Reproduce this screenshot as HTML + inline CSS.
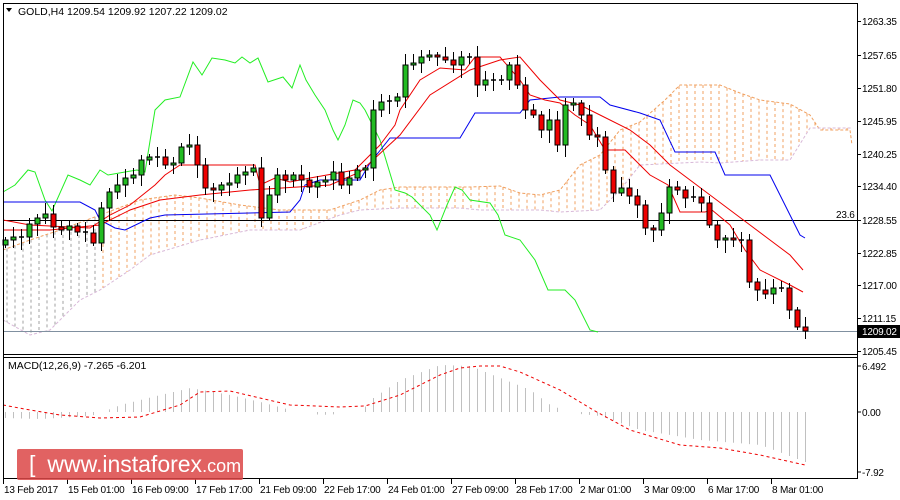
<!DOCTYPE html>
<html><head><meta charset="utf-8">
<style>
html,body{margin:0;padding:0;background:#fff;}
body{width:900px;height:500px;overflow:hidden;position:relative;font-family:"Liberation Sans",sans-serif;}
svg{position:absolute;left:0;top:0;}
svg text{font-family:"Liberation Sans",sans-serif;font-size:10.5px;fill:#000;}
svg text.ax{font-size:10px;letter-spacing:-0.2px;}
#logo{position:absolute;left:17px;top:449px;width:226px;height:31px;background:rgba(220,70,70,0.85);border-radius:2px;color:#fff;font-size:23px;line-height:31px;white-space:nowrap;}
</style></head><body>
<svg id="s" width="900" height="500" xmlns="http://www.w3.org/2000/svg"></svg>
<div id="logo"><span style="margin-left:12px">[</span><span style="margin-left:12px">www.instaforex</span><span style="font-size:18px">.com</span><span style="margin-left:6px">]</span></div>
<script>
(function(){
var s=document.getElementById('s');var h='';
function pl(pts,col,w,dash){return '<polyline fill="none" stroke="'+col+'" stroke-width="'+(w||1)+'"'+(dash?' stroke-dasharray="'+dash+'"':'')+' points="'+pts.map(function(p){return p[0]+','+p[1]}).join(' ')+'"/>';}
function at(pts,x){for(var i=0;i<pts.length-1;i++){if(x>=pts[i][0]&&x<=pts[i+1][0]){var t=(x-pts[i][0])/(pts[i+1][0]-pts[i][0]);return pts[i][1]+t*(pts[i+1][1]-pts[i][1]);}}return null;}
var A=[[3,250],[30,240],[60,230],[100,215],[140,200],[175,195],[200,198],[240,205],[280,210],[330,210],[360,200],[380,190],[400,187],[470,187],[500,186],[520,193],[540,195],[560,190],[580,165],[600,155],[620,130],[640,122],[665,100],[680,85],[720,85],[740,93],[760,100],[790,104],[810,115],[820,130],[850,130],[852,145]];
var B=[[3,320],[30,335],[50,330],[80,300],[100,290],[130,270],[150,255],[200,240],[250,230],[300,230],[340,215],[360,210],[400,208],[460,208],[480,210],[540,210],[560,212],[600,210],[620,190],[640,165],[700,162],[720,163],[760,160],[790,160],[810,128],[852,128]];
for(var xx=7;xx<852;xx+=8){var a=at(A,xx),b=at(B,xx);if(a==null||b==null)continue;var cc=xx<100?'#a0a0a0':'#f0a060';h+='<line x1="'+xx+'" x2="'+xx+'" y1="'+a+'" y2="'+b+'" stroke="'+cc+'" stroke-dasharray="3,3"/>';}
h+=pl(A,'#f0a060',1,'3,2');h+=pl(B,'#d8b8d8',1,'3,2');
h+='<line x1="3" x2="857" y1="220.5" y2="220.5" stroke="#000"/>';
h+='<line x1="3" x2="857" y1="331.5" y2="331.5" stroke="#8090a0"/>';
h+='<text class="ax" x="836" y="218">23.6</text>';
h+=pl([[3,192],[15,185],[28,170],[35,172],[45,200],[52,211],[68,175],[80,180],[90,185],[100,170],[108,175],[125,172],[137,170],[145,172],[155,110],[165,100],[180,97],[193,62],[202,75],[212,58],[225,60],[235,63],[242,57],[250,63],[258,58],[268,82],[283,77],[292,88],[300,65],[306,80],[315,95],[325,110],[333,130],[338,140],[345,125],[353,100],[360,103],[365,110],[380,140],[395,190],[405,193],[412,197],[430,215],[437,230],[447,205],[455,187],[462,190],[470,200],[490,203],[498,215],[505,235],[520,240],[535,260],[548,290],[565,290],[575,300],[590,330],[598,332]],'#22ee22');
h+=pl([[3,202],[80,202],[95,210],[100,220],[115,228],[125,230],[150,218],[165,215],[290,212],[300,200],[305,185],[320,180],[360,180],[370,163],[390,138],[420,138],[460,138],[475,113],[520,113],[530,100],[560,97],[600,97],[610,105],[640,113],[660,120],[675,152],[715,152],[725,175],[770,175],[780,195],[800,235],[805,238]],'#0000ee');
h+=pl([[3,220],[30,225],[90,228],[110,215],[130,205],[155,185],[165,175],[180,165],[255,165],[260,185],[275,178],[290,182],[310,178],[355,170],[365,160],[380,145],[395,125],[400,110],[420,80],[440,68],[465,70],[475,57],[500,57],[520,80],[530,95],[545,100],[560,103],[575,115],[590,125],[605,150],[625,150],[640,165],[650,175],[668,185],[680,212],[705,212],[712,210],[730,225],[745,250],[760,270],[790,285],[803,292]],'#ee0000');
h+=pl([[3,230],[50,230],[100,225],[130,210],[160,200],[200,195],[250,190],[330,185],[360,172],[400,135],[430,95],[470,70],[500,60],[520,57],[540,80],[560,100],[580,105],[600,115],[630,130],[650,145],[670,165],[690,180],[710,195],[730,210],[750,225],[770,240],[790,255],[803,270]],'#ee0000');
var C=[240,237,237,224,218,214,227,230,226,232,233,243,208,192,185,178,175,160,157,157,165,163,147,145,165,188,190,185,183,175,172,168,218,195,175,180,175,180,187,182,180,172,185,178,170,168,110,102,101,97,65,63,57,55,57,60,65,57,57,85,80,80,80,65,85,110,115,130,120,145,105,103,115,135,137,170,193,188,196,205,228,230,213,187,190,198,197,203,225,240,238,240,240,282,290,294,288,288,310,327,331];
var prev=245;
for(var i=0;i<C.length;i++){var x=5+8*i,o=prev,c=C[i];var t0=Math.min(o,c),b0=Math.max(o,c);var hi=t0-3-(i*7%9),lo=b0+3+(i*5%11);
h+='<line x1="'+(x+.5)+'" x2="'+(x+.5)+'" y1="'+hi+'" y2="'+lo+'" stroke="#000"/>';
if(b0-t0<1.5){h+='<line x1="'+(x-2)+'" x2="'+(x+3)+'" y1="'+t0+'" y2="'+t0+'" stroke="#000" stroke-width="1.5"/>';}
else h+='<rect x="'+(x-2)+'" y="'+t0+'" width="5" height="'+(b0-t0)+'" fill="'+(c<o?'#22bb22':'#ee0000')+'" stroke="#000" stroke-width="1"/>';
prev=c;}
var H=[[3,418],[40,419],[90,416],[100,413],[120,405],[160,395],[190,388],[230,395],[260,402],[290,410],[320,415],[360,413],[370,400],[400,380],[440,365],[470,366],[500,378],[530,390],[550,405],[570,413],[600,416],[640,430],[700,440],[760,445],[805,462]];
for(var j=0;j<C.length;j++){var x2=5+8*j;var y=at(H,x2);if(Math.abs(y-412)<2)continue;h+='<line x1="'+(x2+.5)+'" x2="'+(x2+.5)+'" y1="412" y2="'+y+'" stroke="#c0c0c0"/>';}
h+=pl([[3,405],[30,410],[60,415],[100,418],[140,417],[180,405],[200,392],[230,391],[260,398],[290,405],[340,407],[365,406],[400,395],[440,375],[460,368],[480,366],[500,366],[520,372],[560,390],[595,411],[630,430],[680,445],[720,448],[760,455],[805,465]],'#ee0000',1,'3,3');
h+='<text x="8" y="369">MACD(12,26,9) -7.265 -6.201</text>';
h+='<rect x="3.5" y="3.5" width="854" height="475" fill="none" stroke="#000"/>';
h+='<line x1="3" x2="858" y1="354.5" y2="354.5" stroke="#000"/><line x1="3" x2="858" y1="357.5" y2="357.5" stroke="#000"/>';
h+='<polygon points="6,8 12,8 9,12" fill="#000"/><text x="18" y="15">GOLD,H4  1209.54 1209.92 1207.22 1209.02</text>';
var L=[['1263.35',21],['1257.65',55],['1251.80',88],['1245.95',121],['1240.25',154],['1234.40',186],['1228.55',220],['1222.85',253],['1217.00',285],['1211.15',318],['1205.45',351]];
L.forEach(function(l){h+='<line x1="857" x2="861" y1="'+(l[1]+.5)+'" y2="'+(l[1]+.5)+'" stroke="#000"/><text class="ax" x="862" y="'+(l[1]+4)+'">'+l[0]+'</text>';});
h+='<rect x="858" y="325" width="42" height="13" fill="#000"/><text class="ax" x="862" y="335" style="fill:#fff">1209.02</text>';
[['6.492',366],['0.00',412],['-7.92',472]].forEach(function(l){h+='<line x1="857" x2="861" y1="'+l[1]+'" y2="'+l[1]+'" stroke="#000"/><text class="ax" x="862" y="'+(l[1]+4)+'">'+l[0]+'</text>';});
var T=['13 Feb 2017','15 Feb 01:00','16 Feb 09:00','17 Feb 17:00','21 Feb 09:00','22 Feb 17:00','24 Feb 01:00','27 Feb 09:00','28 Feb 17:00','2 Mar 01:00','3 Mar 09:00','6 Mar 17:00','8 Mar 01:00'];
T.forEach(function(t,k){var xt=3+64*k;h+='<line x1="'+(xt+.5)+'" x2="'+(xt+.5)+'" y1="479" y2="484" stroke="#000"/><text class="ax" x="'+(xt+1)+'" y="493">'+t+'</text>';});
s.innerHTML=h;
})();
</script>
</body></html>
